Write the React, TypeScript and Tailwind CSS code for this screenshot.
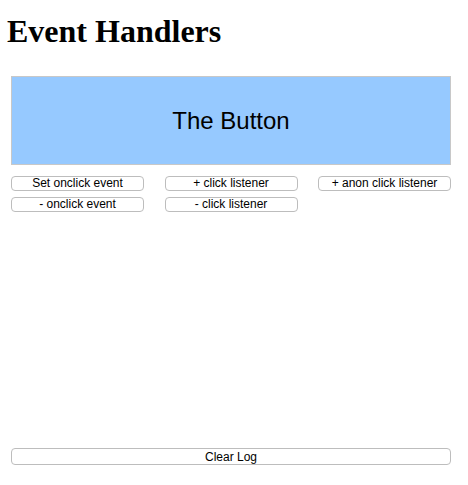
import React from "react";

const btn =
  "h-[15px] rounded-[4px] border border-[#bdbdbd] bg-white text-[12px] leading-[13px] text-black flex items-center justify-center [font-family:'Liberation_Sans',Arial,sans-serif]";

export default function App() {
  return (
    <div className="w-[468px] h-[485px] bg-white pl-[11px] flex flex-col">
      <h1 className="mt-[13px] -ml-[4px] text-[32px] leading-[36px] font-bold text-black [font-family:'Liberation_Serif','Times_New_Roman',serif]">
        Event Handlers
      </h1>
      <div className="mt-[27px] w-[440px] h-[89px] bg-[#96c9ff] border border-[#c8c8c8] flex items-center justify-center text-[24px] text-black [font-family:'Liberation_Sans',Arial,sans-serif]">
        The Button
      </div>
      <div className="mt-[11px] w-[440px] grid grid-cols-3 gap-x-[20.5px] gap-y-[6px]">
        <div className={btn}>Set onclick event</div>
        <div className={btn}>+ click listener</div>
        <div className={btn}>+ anon click listener</div>
        <div className={btn}>- onclick event</div>
        <div className={btn}>- click listener</div>
      </div>
      <div className="flex-1" />
      <div className="mb-[20px] w-[440px] h-[17px] rounded-[4px] border border-[#bdbdbd] bg-white text-[12px] text-black flex items-center justify-center [font-family:'Liberation_Sans',Arial,sans-serif]">
        Clear Log
      </div>
    </div>
  );
}
